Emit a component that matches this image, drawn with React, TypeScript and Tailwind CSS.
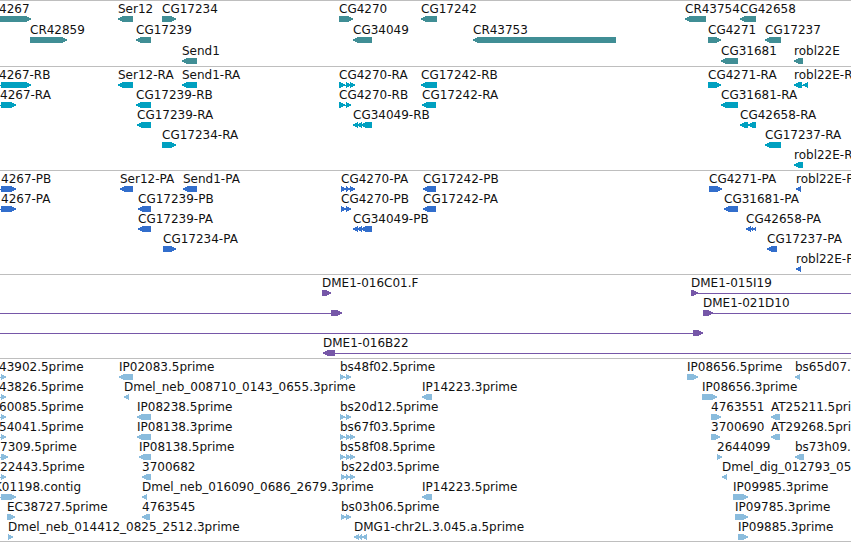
import React from "react";

type Span = [number, number];

interface Feature {
  name?: string;
  /** Label position, where it does not follow the start of the first exon. */
  labelAt?: number;
  strand: "+" | "-";
  exons: Span[];
  line?: Span;
}

interface Track {
  title: string;
  color: string;
  rowClass: string;
  padClass: string;
  rows: Feature[][];
}

const VIEW_END = 4000;

/** Line that joins the first exon to the last. */
function intron(exons: Span[]): Span {
  return [exons[0][0] + 1, exons[exons.length - 1][1] - 1];
}

function fwd(name: string, ...exons: Span[]): Feature {
  return { name, strand: "+", exons, line: intron(exons) };
}

function rev(name: string, ...exons: Span[]): Feature {
  return { name, strand: "-", exons, line: intron(exons) };
}

/** A feature that starts left of the visible region. */
function cut(name: string, labelAt: number, start: number, end: number): Feature {
  return { name, labelAt, strand: "+", exons: [[start, end]], line: [0, 2] };
}

const tracks: Track[] = [
  {
    title: "Genes",
    color: "fill-[#408e95]",
    rowClass: "h-[21px]",
    padClass: "pb-[2px]",
    rows: [
      [
        cut("4267", -1, -6, 31),
        rev("Ser12", [118, 133]),
        fwd("CG17234", [162, 176]),
        fwd("CG4270", [339, 353]),
        rev("CG17242", [421, 437]),
        rev("CR43754", [685, 706]),
        rev("CG42658", [740, 756]),
      ],
      [
        fwd("CR42859", [30, 67]),
        rev("CG17239", [136, 151]),
        rev("CG34049", [353, 372]),
        rev("CR43753", [473, 616]),
        fwd("CG4271", [708, 721]),
        rev("CG17237", [765, 781]),
      ],
      [
        rev("Send1", [182, 197]),
        rev("CG31681", [721, 738]),
        rev("robl22E", [794, 803]),
      ],
    ],
  },
  {
    title: "Transcripts",
    color: "fill-[#00a0c0]",
    rowClass: "h-[20px]",
    padClass: "pb-[3px]",
    rows: [
      [
        cut("4267-RB", -1, 1, 31),
        rev("Ser12-RA", [118, 133]),
        rev("Send1-RA", [182, 197]),
        fwd("CG4270-RA", [339, 345], [346, 351], [350, 355]),
        rev("CG17242-RB", [421, 437]),
        fwd("CG4271-RA", [708, 721]),
        rev("robl22E-RA", [794, 802], [803, 808]),
      ],
      [
        cut("4267-RA", 0, 1, 16),
        rev("CG17239-RB", [136, 151]),
        fwd("CG4270-RB", [339, 345], [346, 351]),
        rev("CG17242-RA", [422, 436]),
        rev("CG31681-RA", [721, 738]),
      ],
      [
        rev("CG17239-RA", [137, 151]),
        rev("CG34049-RB", [353, 358], [357, 362], [361, 372]),
        rev("CG42658-RA", [740, 748], [748, 756]),
      ],
      [fwd("CG17234-RA", [162, 176]), rev("CG17237-RA", [765, 781])],
      [rev("robl22E-RB", [794, 803])],
    ],
  },
  {
    title: "Proteins",
    color: "fill-[#326ecc]",
    rowClass: "h-[20px]",
    padClass: "pb-[3px]",
    rows: [
      [
        cut("4267-PB", 1, 1, 16),
        rev("Ser12-PA", [120, 133]),
        rev("Send1-PA", [183, 197]),
        fwd("CG4270-PA", [341, 346], [346, 350], [350, 355]),
        rev("CG17242-PB", [423, 436]),
        fwd("CG4271-PA", [709, 722]),
        rev("robl22E-PA", [796, 801]),
      ],
      [
        cut("4267-PA", 1, 1, 16),
        rev("CG17239-PB", [138, 151]),
        fwd("CG4270-PB", [341, 346], [346, 351]),
        rev("CG17242-PA", [423, 436]),
        rev("CG31681-PA", [724, 738]),
      ],
      [
        rev("CG17239-PA", [138, 151]),
        rev("CG34049-PB", [353, 358], [357, 362], [361, 372]),
        rev("CG42658-PA", [746, 751], [750, 753], [753, 756]),
      ],
      [fwd("CG17234-PA", [163, 176]), rev("CG17237-PA", [767, 777])],
      [rev("robl22E-PB", [796, 801])],
    ],
  },
  {
    title: "Clones",
    color: "fill-[#7657a8]",
    rowClass: "h-[20px]",
    padClass: "pb-[3px]",
    rows: [
      [
        fwd("DME1-016C01.F", [322, 331]),
        { name: "DME1-015I19", strand: "+", exons: [[691, 698]], line: [698, VIEW_END] },
      ],
      [
        { strand: "+", exons: [[331, 342]], line: [0, 331] },
        { name: "DME1-021D10", strand: "+", exons: [[703, 713]], line: [711, VIEW_END] },
      ],
      [{ strand: "+", exons: [[693, 703]], line: [0, 693] }],
      [{ name: "DME1-016B22", strand: "-", exons: [[323, 335]], line: [335, VIEW_END] }],
    ],
  },
  {
    title: "ESTs",
    color: "fill-[#8abcdd]",
    rowClass: "h-[20px]",
    padClass: "pb-[2px]",
    rows: [
      [
        cut("43902.5prime", -1, 1, 6),
        rev("IP02083.5prime", [119, 133]),
        fwd("bs48f02.5prime", [340, 345], [346, 351]),
        fwd("IP08656.5prime", [687, 698]),
        rev("bs65d07.5prime", [795, 800]),
      ],
      [
        cut("43826.5prime", -1, 1, 6),
        rev("Dmel_neb_008710_0143_0655.3prime", [124, 129]),
        rev("IP14223.3prime", [422, 432]),
        fwd("IP08656.3prime", [702, 717]),
      ],
      [
        cut("60085.5prime", -1, 1, 6),
        rev("IP08238.5prime", [137, 151]),
        fwd("bs20d12.5prime", [340, 345], [346, 351]),
        fwd("4763551", [711, 721]),
        rev("AT25211.5prime", [771, 780]),
      ],
      [
        cut("54041.5prime", -1, 1, 6),
        rev("IP08138.3prime", [137, 151]),
        fwd("bs67f03.5prime", [340, 345], [346, 351], [350, 355]),
        fwd("3700690", [711, 720]),
        rev("AT29268.5prime", [771, 780]),
      ],
      [
        cut("7309.5prime", 0, 1, 8),
        rev("IP08138.5prime", [139, 151]),
        fwd("bs58f08.5prime", [340, 345], [346, 351], [350, 355]),
        fwd("2644099", [717, 722]),
        rev("bs73h09.5prime", [795, 804]),
      ],
      [
        cut("22443.5prime", 0, 1, 6),
        rev("3700682", [142, 151]),
        fwd("bs22d03.5prime", [341, 346], [346, 350], [350, 355]),
        rev("Dmel_dig_012793_05", [722, 727]),
      ],
      [
        cut("K01198.contig", -6, 1, 16),
        rev("Dmel_neb_016090_0686_2679.3prime", [142, 147]),
        rev("IP14223.5prime", [422, 432]),
        fwd("IP09985.3prime", [733, 748]),
      ],
      [
        fwd("EC38727.5prime", [7, 15]),
        rev("4763545", [142, 150]),
        fwd("bs03h06.5prime", [341, 346], [346, 351]),
        fwd("IP09785.3prime", [735, 748]),
      ],
      [
        fwd("Dmel_neb_014412_0825_2512.3prime", [8, 13]),
        rev("DMG1-chr2L.3.045.a.5prime", [354, 359], [358, 362], [362, 367]),
        fwd("IP09885.3prime", [738, 748]),
      ],
    ],
  },
];

/** Outline of one exon: a bar whose end tapers in the strand's direction. */
function arrowPoints([start, end]: Span, strand: "+" | "-"): string {
  const length = end - start;
  const head = Math.min(length, 5);
  const tip = strand === "+" ? end : start;
  const back = strand === "+" ? start : end;
  const dir = strand === "+" ? -1 : 1;
  const neck = tip + dir * head;
  const mid = tip + dir * 2;
  return `${back},0 ${neck},0 ${mid},1.4 ${tip},2.5 ${tip},3.5 ${mid},4.6 ${neck},6 ${back},6`;
}

function Glyphs({ features, color }: { features: Feature[]; color: string }) {
  return (
    <svg
      className={`block h-[6px] w-full ${color}`}
      shapeRendering="crispEdges"
      aria-hidden="true"
    >
      {features.map((feature, i) => (
        <g key={i}>
          {feature.line && (
            <rect
              x={feature.line[0]}
              y={3}
              width={feature.line[1] - feature.line[0]}
              height={1}
            />
          )}
          {feature.exons.map((exon, j) => (
            <polygon key={j} points={arrowPoints(exon, feature.strand)} />
          ))}
        </g>
      ))}
    </svg>
  );
}

function TrackRow({ features, track }: { features: Feature[]; track: Track }) {
  return (
    <li className={track.rowClass}>
      <div className="relative h-[15px]">
        {features.map(
          (feature) =>
            feature.name && (
              <span
                key={feature.name}
                className="absolute top-0 whitespace-nowrap"
                style={{ left: feature.labelAt ?? feature.exons[0][0] }}
              >
                {feature.name}
              </span>
            ),
        )}
      </div>
      <Glyphs features={features} color={track.color} />
    </li>
  );
}

export default function App() {
  return (
    <main className="w-full overflow-hidden border-b border-[#bebebe] bg-white font-['DejaVu_Sans',sans-serif] text-[12px] leading-[17px] text-[#111111]">
      {tracks.map((track) => (
        <section
          key={track.title}
          aria-label={track.title}
          className={`border-t border-[#bebebe] ${track.padClass}`}
        >
          <ul>
            {track.rows.map((features, i) => (
              <TrackRow key={i} features={features} track={track} />
            ))}
          </ul>
        </section>
      ))}
    </main>
  );
}
